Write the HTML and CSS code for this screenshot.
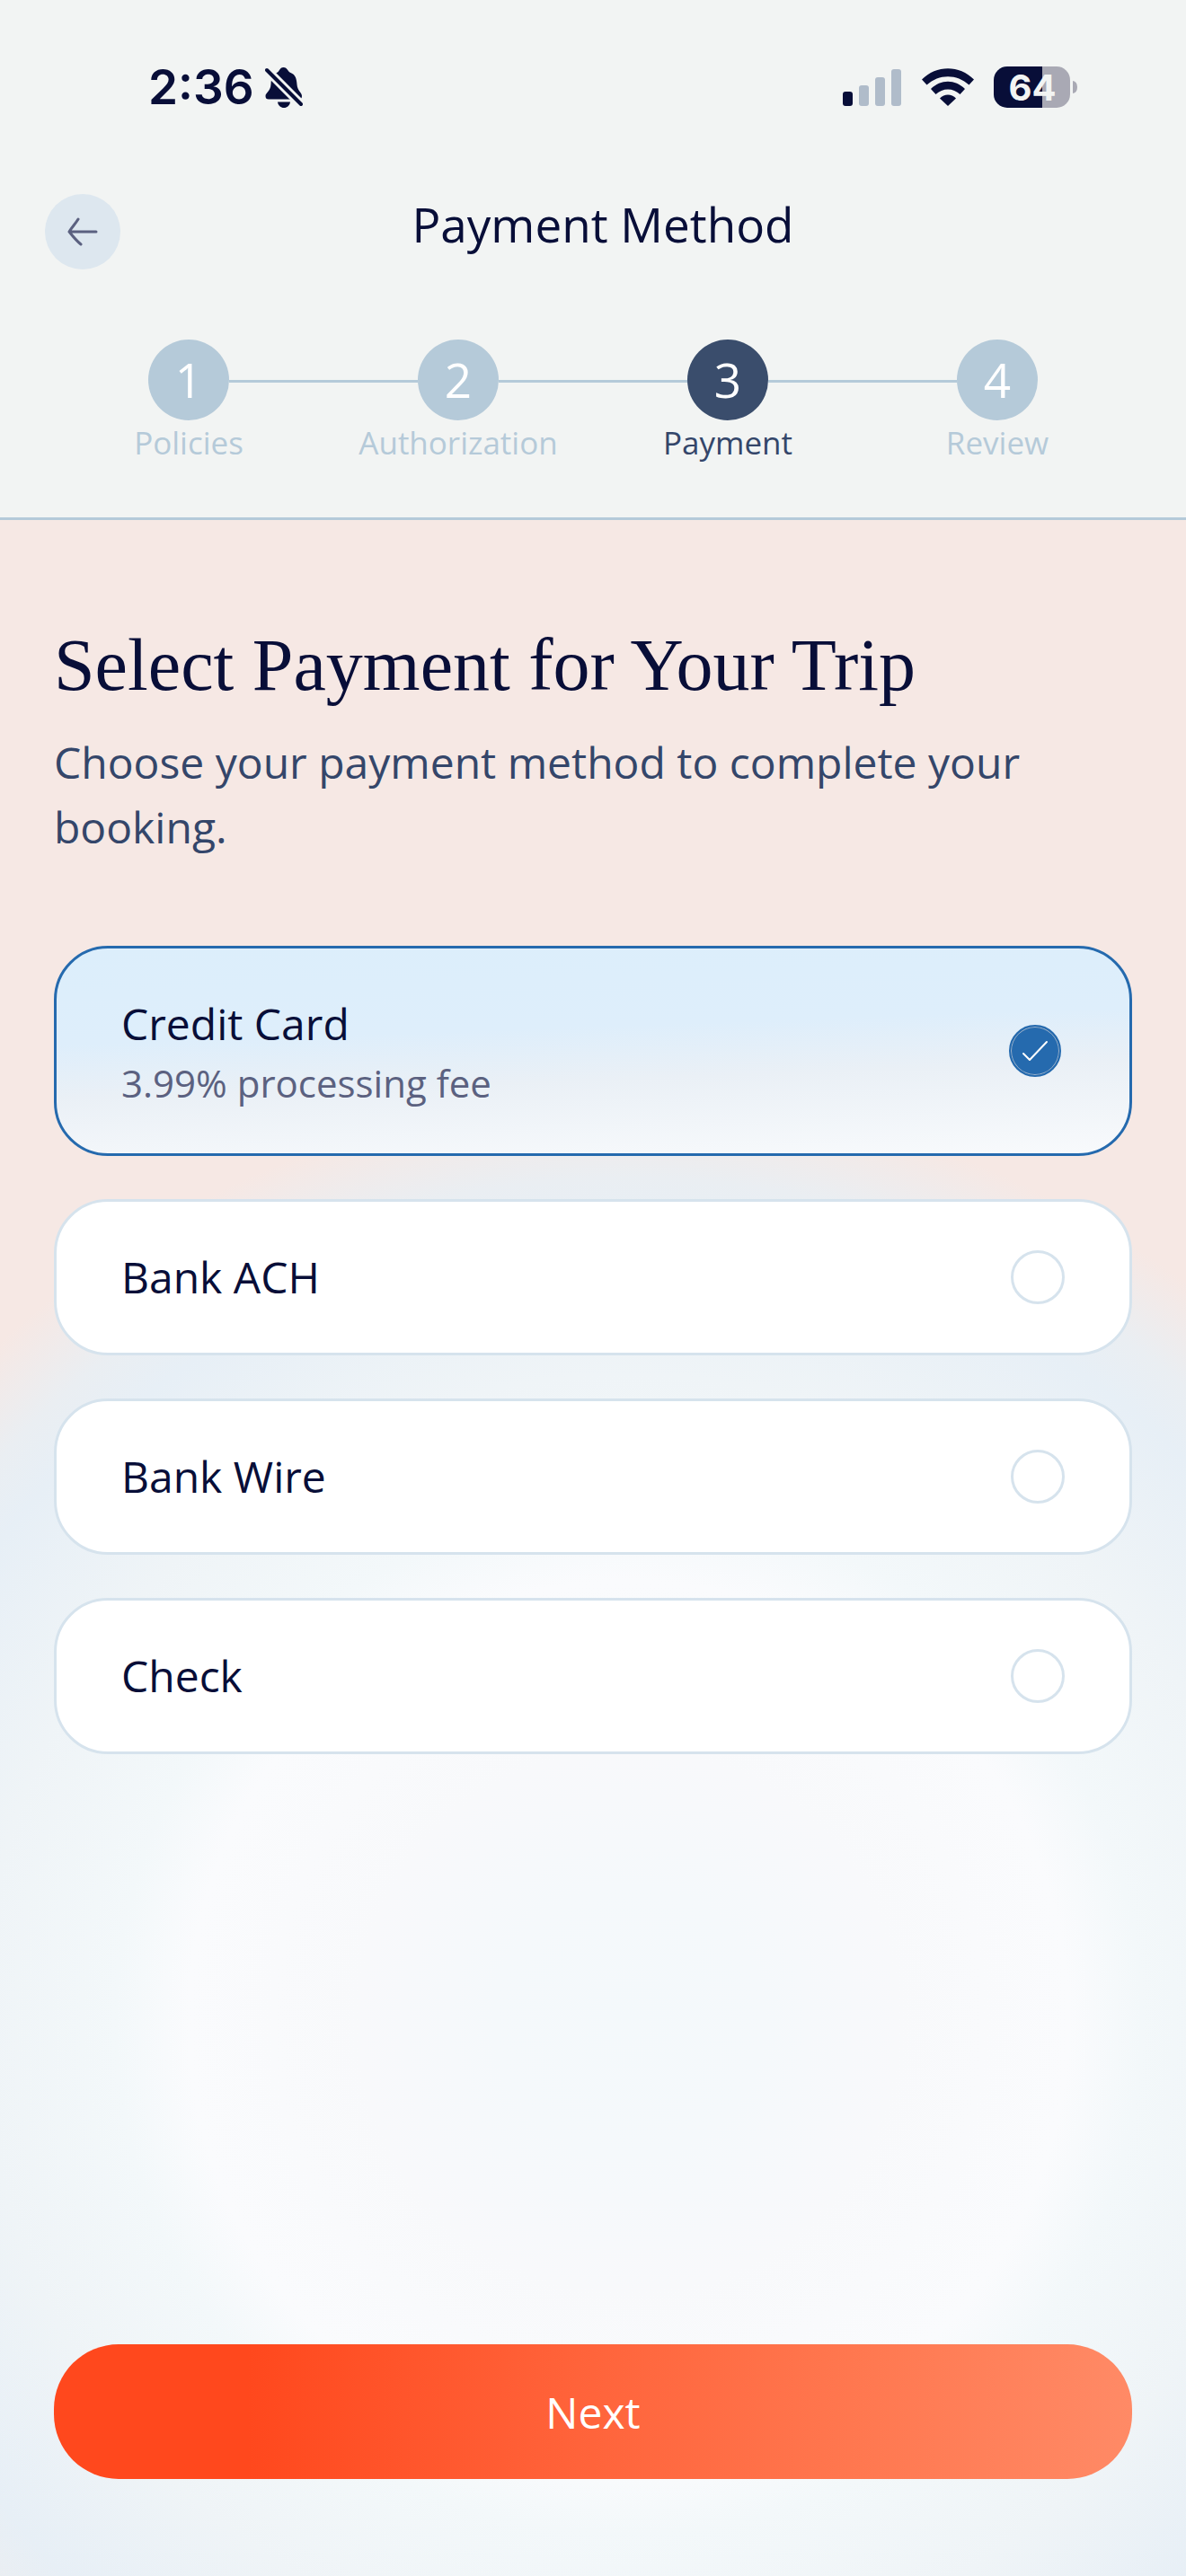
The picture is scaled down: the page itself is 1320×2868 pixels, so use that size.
FILE: index.html
```html
<!DOCTYPE html>
<html lang="en">
<head>
  <meta charset="utf-8">
  <meta name="viewport" content="width=device-width, initial-scale=1">
  <title>Payment Method</title>
  <link rel="stylesheet" href="styles.css">
</head>
<body>
  <header class="header">
    <div class="status-bar">
      <div class="status-left">
        <span class="time">2:36</span>
        <svg class="bell" width="42" height="46" viewBox="0 0 42 46" aria-hidden="true">
          <path d="M13 7C16 6 16 1 20.500 1S25.500 6 28.500 7C34 9 35 14 35.500 20C36 27 41 29 41 33Q41 36.500 37.500 36.500H4Q0.500 36.500 0.500 33C0.500 29 6 28 6.500 20C7 14 7 10 13 7Z" fill="#080e38"/>
          <path d="M14 39.500H28C27.500 43.500 24.500 46 21 46S14.500 43.500 14 39.500Z" fill="#080e38"/>
          <path d="M-2 0L44 46" stroke="#f2f4f3" stroke-width="10"/>
          <path d="M2 4L40 42" stroke="#080e38" stroke-width="4" stroke-linecap="round"/>
        </svg>
      </div>
      <div class="status-right">
        <svg width="66" height="42" viewBox="0 0 66 42" aria-hidden="true">
          <rect x="0" y="26" width="11" height="16" rx="3" fill="#080e38"/>
          <rect x="18" y="19" width="11" height="23" rx="3" fill="#b0bcca"/>
          <rect x="36" y="10" width="11" height="32" rx="3" fill="#b0bcca"/>
          <rect x="54" y="1" width="11" height="41" rx="3" fill="#b0bcca"/>
        </svg>
        <svg width="58" height="42" viewBox="0 0 58 42" aria-hidden="true">
          <path d="M0 12.500C16-4 42-4 58 12.500L52.500 18.500C39 6 19 6 5.500 18.500Z" fill="#080e38"/>
          <path d="M10 23C21 12 37 12 48 23L42.500 29C35 21.500 23 21.500 15.500 29Z" fill="#080e38"/>
          <path d="M20 33.500C25 28 33 28 38 33.500L29 42Z" fill="#080e38"/>
        </svg>
        <svg class="battery" width="94" height="46" viewBox="0 0 94 46" aria-label="Battery 64%">
          <path d="M15 0H54V46H15A15 15 0 0 1 0 31V15A15 15 0 0 1 15 0Z" fill="#080e38"/>
          <path d="M54 0H70A15 15 0 0 1 85 15V31A15 15 0 0 1 70 46H54Z" fill="#a9a9b4"/>
          <path d="M88 16Q93 17 93 23T88 30Z" fill="#a9a9b4"/>
          <text class="battery-text" x="43" y="38" text-anchor="middle">64</text>
        </svg>
      </div>
    </div>

    <div class="nav-bar">
      <button class="back-button" type="button" aria-label="Back">
        <svg width="34" height="32" viewBox="0 0 34 32" fill="none" stroke="#5b6180" stroke-width="3" stroke-linecap="round" stroke-linejoin="round">
          <path d="M32 16H2M12 2C9 7 5 11 2 16C6 21 10 26 15 30"/>
        </svg>
      </button>
      <h1 class="nav-title">Payment Method</h1>
    </div>

    <ol class="steps">
      <li class="step"><span class="step-number">1</span><span>Policies</span></li>
      <li class="step"><span class="step-number">2</span><span>Authorization</span></li>
      <li class="step active" aria-current="step"><span class="step-number">3</span><span>Payment</span></li>
      <li class="step"><span class="step-number">4</span><span>Review</span></li>
    </ol>
  </header>

  <form class="content">
    <h2 class="heading">Select Payment for Your Trip</h2>
    <p class="subheading">Choose your payment method to complete your booking.</p>

    <div class="options">
      <label class="option selected" for="creditCard">
        <span class="option-text">
          <span>Credit Card</span>
          <span class="option-fee">3.99% processing fee</span>
        </span>
        <span class="radio">
          <input type="radio" name="method" id="creditCard" checked>
          <svg class="check" width="30" height="24" viewBox="0 0 30 24" fill="none" stroke="#ffffff" stroke-width="2" stroke-linecap="round" stroke-linejoin="round">
            <path d="M2 15L9 22L28 2"/>
          </svg>
        </span>
      </label>

      <label class="option" for="bankAch">
        <span class="option-text">Bank ACH</span>
        <span class="radio"><input type="radio" name="method" id="bankAch"></span>
      </label>

      <label class="option" for="bankWire">
        <span class="option-text">Bank Wire</span>
        <span class="radio"><input type="radio" name="method" id="bankWire"></span>
      </label>

      <label class="option" for="check">
        <span class="option-text">Check</span>
        <span class="radio"><input type="radio" name="method" id="check"></span>
      </label>
    </div>

    <button class="next-button" type="button">Next</button>
  </form>
</body>
</html>
```

FILE: styles.css
```css
* {
  box-sizing: border-box;
}

body {
  display: flex;
  flex-direction: column;
  min-height: 100vh;
  margin: 0;
  color: #080e38;
  font-family: "Open Sans", sans-serif;
  font-size: 48px;
}

h1,
h2,
p,
ol {
  margin: 0;
  padding: 0;
  font-weight: 400;
}

button {
  border: none;
  font-family: inherit;
}

/* Header */
.header {
  background: #f2f4f3;
  border-bottom: 3px solid #b5cad9;
}

.status-bar {
  display: flex;
  justify-content: space-between;
  align-items: center;
  padding: 64px 120px 0 165px;
}

.status-left,
.status-right {
  display: flex;
  align-items: center;
  height: 66px;
}

.status-left {
  gap: 12px;
}

.status-right {
  gap: 22px;
}

.time {
  font-family: Inter, sans-serif;
  font-size: 53px;
  font-weight: 600;
}

.battery {
  overflow: visible;
}

.battery-text {
  fill: #f2f4f3;
  font-family: Inter, sans-serif;
  font-size: 40px;
  font-weight: 700;
}

.nav-bar {
  display: grid;
  grid-template-columns: 84px 1fr 84px;
  padding: 86px 50px 0;
}

.back-button {
  display: flex;
  align-items: center;
  justify-content: center;
  width: 84px;
  height: 84px;
  padding: 0;
  border-radius: 50%;
  background: #dde7ef;
}

.nav-title {
  padding-left: 22px;
  font-size: 53px;
  line-height: 68px;
  text-align: center;
}

/* Progress steps */
.steps {
  display: grid;
  grid-template-columns: repeat(4, 1fr);
  padding: 78px 60px 58px;
  list-style: none;
}

.step {
  position: relative;
  display: flex;
  flex-direction: column;
  align-items: center;
  color: #b5cad9;
  font-size: 35px;
  line-height: 50px;
}

.step + .step::before {
  content: "";
  position: absolute;
  top: 45px;
  right: calc(50% + 45px);
  width: calc(100% - 90px);
  height: 3px;
  background: #b5cad9;
}

.step-number {
  display: flex;
  align-items: center;
  justify-content: center;
  width: 90px;
  height: 90px;
  border-radius: 50%;
  background: #b5cad9;
  color: #ffffff;
  font-size: 53px;
}

.active {
  color: #34466a;
}

.active .step-number {
  background: #3a4d6c;
}

/* Page content */
.content {
  display: flex;
  flex: 1;
  flex-direction: column;
  padding: 108px 60px;
  background: radial-gradient(circle at 53% 73%, #f4f9fb 0, #f5f9fb 150px, #f8f9fb 300px, #fafbfd 490px, #f3f8fa 570px, #eff4f7 720px, #e7eff6 880px, #eaeef2 940px, #f6e8e4 1030px);
}

.heading {
  font-family: "Liberation Serif", serif;
  font-size: 82px;
  line-height: 108px;
}

.subheading {
  margin-top: 18px;
  color: #34466a;
  line-height: 72px;
}

.options {
  display: flex;
  flex-direction: column;
  gap: 48px;
  margin-top: 96px;
}

.option {
  display: flex;
  align-items: center;
  justify-content: space-between;
  min-height: 174px;
  padding: 48px 72px;
  border: 3px solid #d6e3ed;
  border-radius: 60px;
  background: #ffffff;
  line-height: 72px;
}

.option-text {
  display: flex;
  flex-direction: column;
}

.option-fee {
  color: #5b6180;
  font-size: 42px;
  line-height: 60px;
}

.selected {
  border-color: #256aae;
  background: linear-gradient(178deg, #dceefb 0%, #deeefb 40%, #eaf0f6 62%, #f8fafc 100%);
}

.radio {
  display: grid;
  place-items: center;
}

.radio input,
.radio .check {
  grid-area: 1 / 1;
}

.radio input {
  appearance: none;
  width: 60px;
  height: 60px;
  margin: 0;
  border: 3px solid #d6e3ed;
  border-radius: 50%;
}

.radio input:checked {
  width: 58px;
  height: 58px;
  margin-right: 4px;
  border: 2px solid #256aae;
  background: #256aae;
  box-shadow: inset 0 0 0 1px #9db3cb;
}

.check {
  z-index: 1;
  margin-right: 4px;
}

.next-button {
  height: 150px;
  margin-top: auto;
  border-radius: 72px;
  background: linear-gradient(90deg, #ff481d 0%, #ff481d 18%, #ff6037 45%, #ff7850 75%, #ff8a66 100%);
  color: #ffffff;
  font-size: 48px;
}
```
